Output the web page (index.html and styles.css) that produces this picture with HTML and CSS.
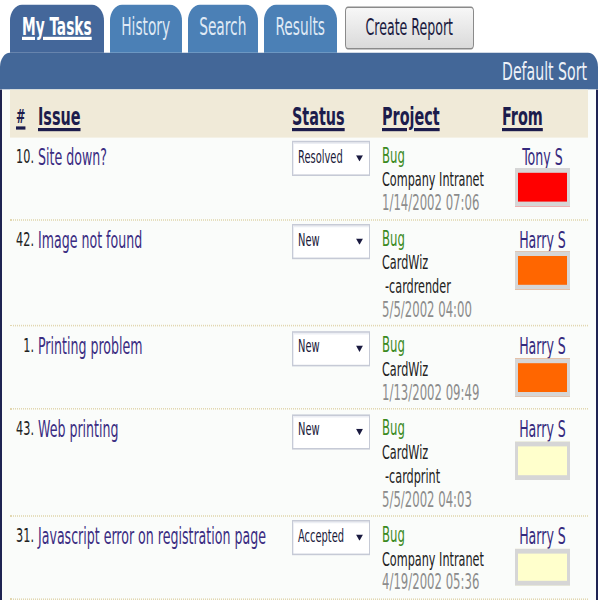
FILE: index.html
```html
<!DOCTYPE html>
<html lang="en">
<head>
    <meta charset="UTF-8">
    <meta name="viewport" content="width=device-width, initial-scale=1.0">
    <title>My Tasks</title>
    <link rel="stylesheet" href="styles.css">
</head>
<body>
    <div class="page">
        <div class="tabs">
            <a href="#" class="tab active">My Tasks</a>
            <a href="#" class="tab">History</a>
            <a href="#" class="tab">Search</a>
            <a href="#" class="tab">Results</a>
            <button type="button" class="report">Create Report</button>
        </div>
        <div class="bar">Default Sort</div>

        <div class="panel">
            <div class="row head">
                <span class="num"><a href="#">#</a></span>
                <span><a href="#">Issue</a></span>
                <span><a href="#">Status</a></span>
                <span><a href="#">Project</a></span>
                <span><a href="#">From</a></span>
            </div>

            <div class="row">
                <span class="num">10.</span>
                <span class="title">Site down?</span>
                <div class="status"><span>Resolved</span><svg width="7" height="4" viewBox="0 0 7 4"><polygon points="0,0 7,0 3.5,4"/></svg></div>
                <div class="project">
                    <div class="type">Bug</div>
                    <div class="name">Company Intranet</div>
                    <div class="date">1/14/2002 07:06</div>
                </div>
                <div class="from">
                    <div class="who">Tony S</div>
                    <div class="flag red"></div>
                </div>
            </div>

            <div class="row">
                <span class="num">42.</span>
                <span class="title">Image not found</span>
                <div class="status"><span>New</span><svg width="7" height="4" viewBox="0 0 7 4"><polygon points="0,0 7,0 3.5,4"/></svg></div>
                <div class="project">
                    <div class="type">Bug</div>
                    <div class="name">CardWiz</div>
                    <div class="name sub">-cardrender</div>
                    <div class="date">5/5/2002 04:00</div>
                </div>
                <div class="from">
                    <div class="who">Harry S</div>
                    <div class="flag orange"></div>
                </div>
            </div>

            <div class="row">
                <span class="num">1.</span>
                <span class="title">Printing problem</span>
                <div class="status"><span>New</span><svg width="7" height="4" viewBox="0 0 7 4"><polygon points="0,0 7,0 3.5,4"/></svg></div>
                <div class="project">
                    <div class="type">Bug</div>
                    <div class="name">CardWiz</div>
                    <div class="date">1/13/2002 09:49</div>
                </div>
                <div class="from">
                    <div class="who">Harry S</div>
                    <div class="flag orange"></div>
                </div>
            </div>

            <div class="row">
                <span class="num">43.</span>
                <span class="title">Web printing</span>
                <div class="status"><span>New</span><svg width="7" height="4" viewBox="0 0 7 4"><polygon points="0,0 7,0 3.5,4"/></svg></div>
                <div class="project">
                    <div class="type">Bug</div>
                    <div class="name">CardWiz</div>
                    <div class="name sub">-cardprint</div>
                    <div class="date">5/5/2002 04:03</div>
                </div>
                <div class="from">
                    <div class="who">Harry S</div>
                    <div class="flag pale"></div>
                </div>
            </div>

            <div class="row">
                <span class="num">31.</span>
                <span class="title">Javascript error on registration page</span>
                <div class="status"><span>Accepted</span><svg width="7" height="4" viewBox="0 0 7 4"><polygon points="0,0 7,0 3.5,4"/></svg></div>
                <div class="project">
                    <div class="type">Bug</div>
                    <div class="name">Company Intranet</div>
                    <div class="date">4/19/2002 05:36</div>
                </div>
                <div class="from">
                    <div class="who">Harry S</div>
                    <div class="flag pale"></div>
                </div>
            </div>
        </div>
    </div>
</body>
</html>
```

FILE: styles.css
```css
html {
    overflow: hidden;
    background: #fff;
}
body {
    margin: 0;
    padding: 0;
    height: 600px;
    font-family: "DejaVu Sans Condensed", "DejaVu Sans", sans-serif;
    font-stretch: condensed;
    color: #222;
}
.page {
    width: 598px;
    transform: scaleY(1.6);
    transform-origin: 0 0;
}
.tabs {
    display: flex;
    align-items: flex-start;
    gap: 6px;
    height: 29.5px;
    padding: 3px 0 0 10px;
}
.tab {
    height: 29.5px;
    line-height: 29.5px;
    padding: 0 11.5px;
    font-size: 15.3px;
    color: #dfe9f5;
    background: #4b80b6;
    text-decoration: none;
    border-radius: 12px 12px 0 0 / 10px 10px 0 0;
}
.tab.active {
    padding: 0 12px;
    color: #fff;
    background: #44679a;
    font-weight: bold;
    text-decoration: underline;
    text-decoration-thickness: 1.5px;
}
.report {
    height: 27px;
    margin: 0.6px 0 0 2px;
    padding: 0 20px;
    font-family: inherit;
    font-stretch: condensed;
    font-size: 14px;
    color: #1a1a40;
    background: linear-gradient(#f7f7f7, #dadada);
    border: 1px solid #8a8a8a;
    border-radius: 3px;
}
.bar {
    height: 23.75px;
    line-height: 23.75px;
    padding-right: 11px;
    text-align: right;
    font-size: 15.7px;
    color: #eef2f8;
    background: #436798;
    border-radius: 10px 10px 0 0 / 9px 9px 0 0;
}
.panel {
    padding: 0 8px;
    background: #fafcfa;
    border-left: 2px solid #1e2452;
    border-right: 2px solid #1e2452;
}
.row {
    display: grid;
    grid-template-columns: 28px 254px 90px 120px 1fr;
    line-height: 14.8px;
    padding: 5px 0 1.5px;
    border-bottom: 1px dotted #e2d7b0;
}
.head {
    box-sizing: border-box;
    height: 29.4px;
    padding: 9px 0 0;
    background: #f0ead8;
    border-bottom: none;
    font-size: 16px;
    font-weight: bold;
    line-height: 16px;
}
.head a {
    color: #1c1c4c;
    text-decoration: underline;
    text-decoration-thickness: 1.5px;
    text-underline-offset: 2px;
}
.num {
    text-align: right;
    padding-right: 4px;
    font-size: 12.5px;
    color: #222;
}
.head .num {
    text-align: left;
    padding-left: 6px;
}
.title {
    font-size: 14px;
    color: #3a2c82;
}
.status {
    box-sizing: border-box;
    width: 78px;
    height: 22px;
    margin-top: -2.5px;
    padding: 0 6px 0 5px;
    display: flex;
    align-items: center;
    justify-content: space-between;
    font-size: 11px;
    color: #1a1a3a;
    background: #fff;
    border: 1px solid #c6cad6;
    box-shadow: inset 1px 1px 0 #eceef4;
}
.status svg {
    fill: #1a1a40;
}
.type {
    font-size: 13px;
    color: #3b8a1e;
}
.name {
    font-size: 12.5px;
    color: #222;
}
.sub {
    padding-left: 3px;
}
.date {
    font-size: 13px;
    color: #8c8c8c;
}
.from {
    display: flex;
    flex-direction: column;
    align-items: center;
    padding-right: 5px;
}
.who {
    font-size: 14px;
    color: #352a7e;
}
.flag {
    box-sizing: border-box;
    width: 55px;
    height: 23.75px;
    border: 3px solid #d6d6d6;
}
.red { background: #ff0000; }
.orange { background: #ff6600; }
.pale { background: #ffffcc; }
```
